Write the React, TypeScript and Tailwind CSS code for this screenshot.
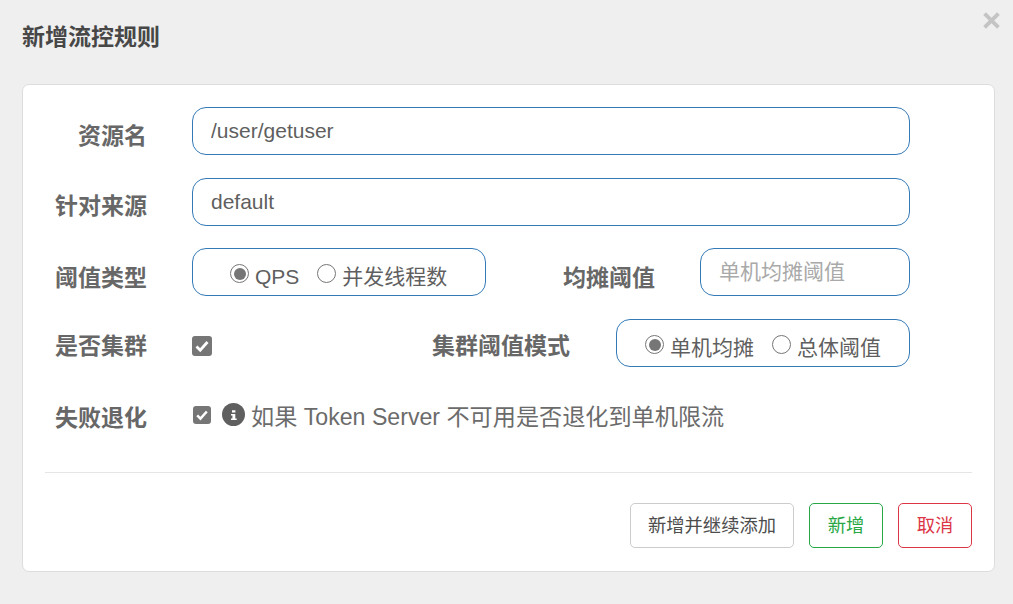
import React from "react";

const FONT = "font-['Liberation_Sans','Noto_Sans_CJK_SC',sans-serif]";

function Label({ children, className = "w-[102px]" }: { children: React.ReactNode; className?: string }) {
  return (
    <label className={`shrink-0 text-right text-[23px] leading-[32px] font-bold text-[#676767] ${className}`}>
      {children}
    </label>
  );
}

function TextInput({ value, placeholder, className = "" }: { value?: string; placeholder?: string; className?: string }) {
  return (
    <input
      readOnly
      value={value ?? ""}
      placeholder={placeholder}
      className={`h-[48px] rounded-[14px] border border-[#337ab7] bg-white px-[18px] text-[21px] text-[#5f5f5f] outline-none placeholder:text-[#a9a9a9] ${className}`}
    />
  );
}

function Radio({ checked, label }: { checked?: boolean; label: string }) {
  return (
    <span className="flex h-[28px] items-center">
      <span className="mt-[3px] flex h-[19px] w-[19px] items-center justify-center rounded-full border-[1.5px] border-[#767676] bg-white">
        {checked && <span className="h-[12px] w-[12px] rounded-full bg-[#767676]" />}
      </span>
      <span className="ml-[6px] mt-[10px] text-[21px] leading-[28px] text-[#5f5f5f]">{label}</span>
    </span>
  );
}

function Check({ size = "h-[20px] w-[20px]", icon = "h-[16px] w-[16px]" }: { size?: string; icon?: string }) {
  return (
    <span className={`flex shrink-0 items-center justify-center rounded-[3px] bg-[#767676] ${size}`}>
      <svg viewBox="0 0 16 16" className={icon}>
        <path d="M2.5 8.5 6.2 12.2 13.5 4" fill="none" stroke="#fff" strokeWidth="2.8" />
      </svg>
    </span>
  );
}

export default function App() {
  return (
    <div className={`${FONT} relative flex h-[604px] w-[1013px] flex-col overflow-hidden bg-[#efefef] px-[22px] pt-[21px]`}>
      <button className="absolute right-[13px] top-[12px] text-[#c4c4c4]" aria-label="close">
        <svg viewBox="0 0 16 16" className="h-[17px] w-[17px]">
          <path d="M1.5 1.5 14.5 14.5M14.5 1.5 1.5 14.5" stroke="currentColor" strokeWidth="3.6" fill="none" />
        </svg>
      </button>
      <h3 className="h-[32px] text-[23px] leading-[32px] font-bold text-[#474747]">新增流控规则</h3>
      <div className="mt-[31px] flex h-[488px] w-[973px] flex-col rounded-[7px] border border-[#dddddd] bg-white pl-[22px] pr-[22px] pt-[22px]">
        <div className="flex h-[48px] items-center">
          <Label className="mt-[10px] w-[102px]">资源名</Label>
          <TextInput value="/user/getuser" className="ml-[45px] w-[718px]" />
        </div>
        <div className="mt-[23px] flex h-[48px] items-center">
          <Label className="mt-[8px] w-[102px]">针对来源</Label>
          <TextInput value="default" className="ml-[45px] w-[718px]" />
        </div>
        <div className="mt-[22px] flex h-[48px] items-center">
          <Label className="mt-[12px] w-[102px]">阈值类型</Label>
          <div className="ml-[45px] flex h-[48px] w-[294px] items-center gap-[18px] rounded-[14px] border border-[#337ab7] pl-[37px]">
            <Radio checked label="QPS" />
            <Radio label="并发线程数" />
          </div>
          <Label className="mt-[12px] w-[169px]">均摊阈值</Label>
          <TextInput placeholder="单机均摊阈值" className="ml-[45px] w-[210px]" />
        </div>
        <div className="mt-[23px] flex h-[48px] items-center">
          <Label className="mt-[6px] w-[102px]">是否集群</Label>
          <span className="ml-[45px] mt-[6px]">
            <Check />
          </span>
          <Label className="mt-[6px] w-[358px]">集群阈值模式</Label>
          <div className="ml-[46px] flex h-[48px] w-[294px] items-center gap-[18px] rounded-[14px] border border-[#337ab7] pl-[28px]">
            <Radio checked label="单机均摊" />
            <Radio label="总体阈值" />
          </div>
        </div>
        <div className="mt-[22px] flex h-[48px] items-center">
          <Label className="mt-[10px] w-[102px]">失败退化</Label>
          <span className="ml-[46px] mt-[4px]">
            <Check size="h-[18px] w-[18px]" icon="h-[14px] w-[14px]" />
          </span>
          <span className="ml-[11px] mt-[3px] flex h-[23px] w-[23px] items-center justify-center rounded-full bg-[#5f5f5f]">
            <svg viewBox="0 0 16 16" className="h-[16px] w-[16px]">
              <path d="M6 3.2h3.4v2.3H6zM5 7h4.3v4.4h1.4v1.6H5v-1.6h1.4V8.6H5z" fill="#fff" />
            </svg>
          </span>
          <span className="ml-[6px] mt-[8px] text-[23.15px] leading-[32px] text-[#6b6b6b]">如果 Token Server 不可用是否退化到单机限流</span>
        </div>
        <div className="mt-[35px] h-px w-full bg-[#e5e5e5]" />
        <div className="mt-[30px] flex justify-end gap-[15px]">
          <button className="h-[45px] w-[164px] rounded-[5px] border border-[#cccccc] bg-white text-[18.3px] text-[#4d4d4d]">新增并继续添加</button>
          <button className="h-[45px] w-[74px] rounded-[5px] border border-[#28a745] bg-white text-[18.3px] text-[#28a745]">新增</button>
          <button className="h-[45px] w-[74px] rounded-[5px] border border-[#dc3545] bg-white text-[18.3px] text-[#dc3545]">取消</button>
        </div>
      </div>
    </div>
  );
}
